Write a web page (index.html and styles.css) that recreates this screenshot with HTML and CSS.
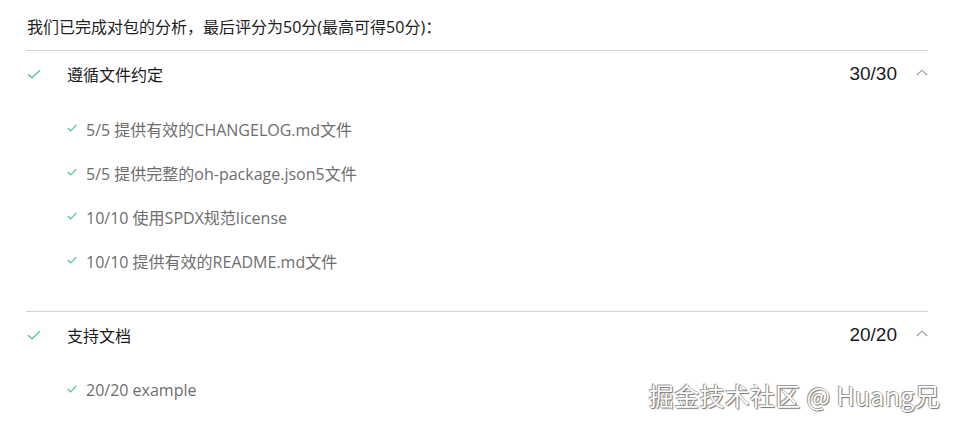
FILE: index.html
```html
<!DOCTYPE html>
<html lang="zh">
<head>
<meta charset="utf-8">
<link rel="stylesheet" href="styles.css">
</head>
<body>
<div class="page">
  <p class="intro">我们已完成对包的分析，最后评分为50分(最高可得50分)：</p>
  <section class="group">
    <div class="group-head">
      <svg class="check" viewBox="0 0 14 10" width="14" height="10"><path d="M1 5.2 L5 8.8 L13 1.2" fill="none" stroke="#5cc29c" stroke-width="1.3"/></svg>
      <span class="group-title">遵循文件约定</span>
      <span class="group-score">30/30</span>
      <svg class="chev" viewBox="0 0 12 7" width="12" height="7"><path d="M0.8 6 L6 1.2 L11.2 6" fill="none" stroke="#999" stroke-width="1.1"/></svg>
    </div>
    <ul class="items">
      <li><svg class="subcheck" viewBox="0 0 10 8" width="10" height="8"><path d="M0.8 4 L3.8 6.8 L9.2 1" fill="none" stroke="#5cc29c" stroke-width="1.2"/></svg>5/5 提供有效的CHANGELOG.md文件</li>
      <li><svg class="subcheck" viewBox="0 0 10 8" width="10" height="8"><path d="M0.8 4 L3.8 6.8 L9.2 1" fill="none" stroke="#5cc29c" stroke-width="1.2"/></svg>5/5 提供完整的oh-package.json5文件</li>
      <li><svg class="subcheck" viewBox="0 0 10 8" width="10" height="8"><path d="M0.8 4 L3.8 6.8 L9.2 1" fill="none" stroke="#5cc29c" stroke-width="1.2"/></svg>10/10 使用SPDX规范license</li>
      <li><svg class="subcheck" viewBox="0 0 10 8" width="10" height="8"><path d="M0.8 4 L3.8 6.8 L9.2 1" fill="none" stroke="#5cc29c" stroke-width="1.2"/></svg>10/10 提供有效的README.md文件</li>
    </ul>
  </section>
  <section class="group">
    <div class="group-head">
      <svg class="check" viewBox="0 0 14 10" width="14" height="10"><path d="M1 5.2 L5 8.8 L13 1.2" fill="none" stroke="#5cc29c" stroke-width="1.3"/></svg>
      <span class="group-title">支持文档</span>
      <span class="group-score">20/20</span>
      <svg class="chev" viewBox="0 0 12 7" width="12" height="7"><path d="M0.8 6 L6 1.2 L11.2 6" fill="none" stroke="#999" stroke-width="1.1"/></svg>
    </div>
    <ul class="items">
      <li><svg class="subcheck" viewBox="0 0 10 8" width="10" height="8"><path d="M0.8 4 L3.8 6.8 L9.2 1" fill="none" stroke="#5cc29c" stroke-width="1.2"/></svg>20/20 example</li>
    </ul>
  </section>
</div>
<div class="watermark">掘金技术社区 @ Huang兄</div>
</body>
</html>
```
FILE: styles.css
```css
html, body {
  margin: 0;
  padding: 0;
  background: #fff;
}
body {
  font-family: "Noto Sans", "Noto Sans CJK SC", sans-serif;
  color: #222;
  overflow: hidden;
  height: 427px;
  position: relative;
}
.page {
  padding: 0 28px 0 26px;
}
.intro {
  margin: 0;
  padding: 16px 0 0 1px;
  height: 50px;
  box-sizing: border-box;
  font-size: 16px;
  line-height: 22px;
  color: #1f1f1f;
}
.group {
  border-top: 1px solid #d4d4d4;
}
.group-head {
  display: flex;
  align-items: center;
  height: 45px;
}
.check {
  margin-left: 1px;
  flex: none;
}
.group-title {
  margin-left: 26px;
  font-size: 16px;
  color: #1a1a1a;
  flex: 1;
}
.group-score {
  font-family: "Liberation Sans", "Noto Sans CJK SC", sans-serif;
  font-size: 19px;
  color: #1a1a1a;
}
.chev {
  margin-left: 19px;
  margin-bottom: 2px;
  flex: none;
}
.items {
  list-style: none;
  margin: 0;
  padding: 11px 0 28px 41px;
}
.items li {
  display: flex;
  align-items: center;
  height: 44px;
  font-family: "Open Sans", "Noto Sans CJK SC", sans-serif;
  font-size: 16px;
  color: #6e6e6e;
}
.subcheck {
  margin-right: 9px;
  margin-bottom: 2px;
  flex: none;
}
.watermark {
  position: absolute;
  right: 16px;
  top: 377px;
  font-family: "Noto Sans CJK SC", sans-serif;
  font-size: 25px;
  color: #fff;
  letter-spacing: 0.3px;
  text-shadow: 0 0 1px #666, 1px 1px 1px #777, -1px -1px 0 #aaa;
}
```
